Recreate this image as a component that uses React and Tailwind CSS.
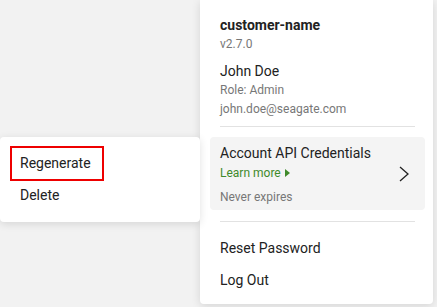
import React from 'react';

function Chevron() {
  return (
    <svg className="w-[10px] h-[16px] text-[#222]" viewBox="0 0 10 16" fill="none" stroke="currentColor" strokeWidth={1.3}>
      <path d="M1 1l8 7-8 7" />
    </svg>
  );
}

export default function App() {
  return (
    <div className="w-[437px] h-[307px] overflow-hidden bg-[#f2f2f2] flex font-['Roboto',sans-serif] text-[#222]">
      {/* Row action menu */}
      <div className="mt-[137px] w-[200px] h-[85px] bg-white rounded-[4px] shadow-[0_2px_8px_rgba(0,0,0,0.12)] pt-[9px] pl-[10px] z-10">
        <div className="w-[94px] h-[35px] border-2 border-[#ee0000] pl-[8px] flex items-center text-[14px]">
          Regenerate
        </div>
        <div className="mt-[4px] pl-[10px] leading-[20px] text-[14px]">Delete</div>
      </div>

      {/* Account panel */}
      <div className="w-[233px] h-[304px] bg-white rounded-b-[4px] shadow-[0_2px_10px_rgba(0,0,0,0.12)] pl-[10px] pr-[8px] pt-[15px]">
        <div className="pl-[10px] pr-[10px]">
          <div className="text-[14px] font-bold leading-[20px]">customer-name</div>
          <div className="text-[12px] leading-[19px] text-[#777]">v2.7.0</div>
          <div className="mt-[7px] text-[14px] leading-[20px]">John Doe</div>
          <div className="text-[12px] leading-[19px] text-[#777]">Role: Admin</div>
          <div className="text-[12px] leading-[19px] text-[#777]">john.doe@seagate.com</div>
          <div className="mt-[7px] h-px bg-[#e2e2e2]" />
        </div>

        <div className="mt-[10px] h-[73px] bg-[#f4f4f4] rounded-[4px] pl-[10px] pr-[16px] pt-[6px] flex items-center justify-between">
          <div className="self-start">
            <div className="text-[14px] leading-[20px]">Account API Credentials</div>
            <div className="mt-px text-[12px] leading-[18px] text-[#3f8a2b] flex items-center gap-[4px]">
              Learn more
              <span className="w-0 h-0 border-y-[4px] border-y-transparent border-l-[5px] border-l-[#3f8a2b]" />
            </div>
            <div className="mt-[6px] text-[12px] leading-[18px] text-[#777]">Never expires</div>
          </div>
          <div className="-mt-[6px]">
            <Chevron />
          </div>
        </div>

        <div className="pl-[10px] pr-[10px]">
          <div className="mt-[11px] h-px bg-[#e2e2e2]" />
          <div className="mt-[16px] text-[14px] leading-[20px]">Reset Password</div>
          <div className="mt-[12px] text-[14px] leading-[20px]">Log Out</div>
        </div>
      </div>
    </div>
  );
}
